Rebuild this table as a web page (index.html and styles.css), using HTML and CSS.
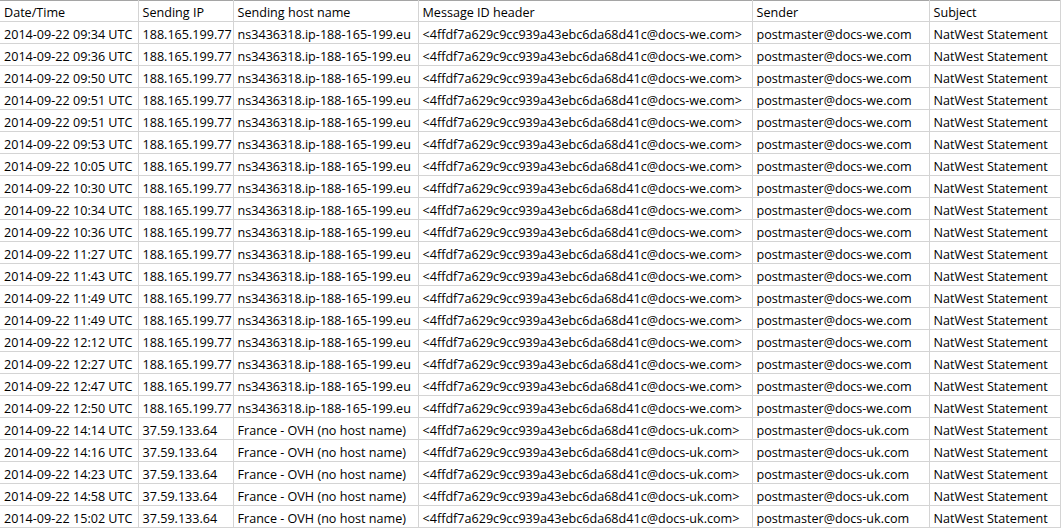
FILE: index.html
```html
<!DOCTYPE html>
<html>
<head>
<meta charset="utf-8">
<link rel="stylesheet" href="styles.css">
</head>
<body>
<table class="sheet">
<colgroup>
<col class="c1"><col class="c2"><col class="c3"><col class="c4"><col class="c5"><col class="c6">
</colgroup>
<thead>
<tr><th>Date/Time</th><th>Sending IP</th><th>Sending host name</th><th>Message ID header</th><th>Sender</th><th>Subject</th></tr>
</thead>
<tbody>
<tr><td>2014-09-22 09:34 UTC</td><td>188.165.199.77</td><td>ns3436318.ip-188-165-199.eu</td><td>&lt;4ffdf7a629c9cc939a43ebc6da68d41c@docs-we.com&gt;</td><td>postmaster@docs-we.com</td><td>NatWest Statement</td></tr>
<tr><td>2014-09-22 09:36 UTC</td><td>188.165.199.77</td><td>ns3436318.ip-188-165-199.eu</td><td>&lt;4ffdf7a629c9cc939a43ebc6da68d41c@docs-we.com&gt;</td><td>postmaster@docs-we.com</td><td>NatWest Statement</td></tr>
<tr><td>2014-09-22 09:50 UTC</td><td>188.165.199.77</td><td>ns3436318.ip-188-165-199.eu</td><td>&lt;4ffdf7a629c9cc939a43ebc6da68d41c@docs-we.com&gt;</td><td>postmaster@docs-we.com</td><td>NatWest Statement</td></tr>
<tr><td>2014-09-22 09:51 UTC</td><td>188.165.199.77</td><td>ns3436318.ip-188-165-199.eu</td><td>&lt;4ffdf7a629c9cc939a43ebc6da68d41c@docs-we.com&gt;</td><td>postmaster@docs-we.com</td><td>NatWest Statement</td></tr>
<tr><td>2014-09-22 09:51 UTC</td><td>188.165.199.77</td><td>ns3436318.ip-188-165-199.eu</td><td>&lt;4ffdf7a629c9cc939a43ebc6da68d41c@docs-we.com&gt;</td><td>postmaster@docs-we.com</td><td>NatWest Statement</td></tr>
<tr><td>2014-09-22 09:53 UTC</td><td>188.165.199.77</td><td>ns3436318.ip-188-165-199.eu</td><td>&lt;4ffdf7a629c9cc939a43ebc6da68d41c@docs-we.com&gt;</td><td>postmaster@docs-we.com</td><td>NatWest Statement</td></tr>
<tr><td>2014-09-22 10:05 UTC</td><td>188.165.199.77</td><td>ns3436318.ip-188-165-199.eu</td><td>&lt;4ffdf7a629c9cc939a43ebc6da68d41c@docs-we.com&gt;</td><td>postmaster@docs-we.com</td><td>NatWest Statement</td></tr>
<tr><td>2014-09-22 10:30 UTC</td><td>188.165.199.77</td><td>ns3436318.ip-188-165-199.eu</td><td>&lt;4ffdf7a629c9cc939a43ebc6da68d41c@docs-we.com&gt;</td><td>postmaster@docs-we.com</td><td>NatWest Statement</td></tr>
<tr><td>2014-09-22 10:34 UTC</td><td>188.165.199.77</td><td>ns3436318.ip-188-165-199.eu</td><td>&lt;4ffdf7a629c9cc939a43ebc6da68d41c@docs-we.com&gt;</td><td>postmaster@docs-we.com</td><td>NatWest Statement</td></tr>
<tr><td>2014-09-22 10:36 UTC</td><td>188.165.199.77</td><td>ns3436318.ip-188-165-199.eu</td><td>&lt;4ffdf7a629c9cc939a43ebc6da68d41c@docs-we.com&gt;</td><td>postmaster@docs-we.com</td><td>NatWest Statement</td></tr>
<tr><td>2014-09-22 11:27 UTC</td><td>188.165.199.77</td><td>ns3436318.ip-188-165-199.eu</td><td>&lt;4ffdf7a629c9cc939a43ebc6da68d41c@docs-we.com&gt;</td><td>postmaster@docs-we.com</td><td>NatWest Statement</td></tr>
<tr><td>2014-09-22 11:43 UTC</td><td>188.165.199.77</td><td>ns3436318.ip-188-165-199.eu</td><td>&lt;4ffdf7a629c9cc939a43ebc6da68d41c@docs-we.com&gt;</td><td>postmaster@docs-we.com</td><td>NatWest Statement</td></tr>
<tr><td>2014-09-22 11:49 UTC</td><td>188.165.199.77</td><td>ns3436318.ip-188-165-199.eu</td><td>&lt;4ffdf7a629c9cc939a43ebc6da68d41c@docs-we.com&gt;</td><td>postmaster@docs-we.com</td><td>NatWest Statement</td></tr>
<tr><td>2014-09-22 11:49 UTC</td><td>188.165.199.77</td><td>ns3436318.ip-188-165-199.eu</td><td>&lt;4ffdf7a629c9cc939a43ebc6da68d41c@docs-we.com&gt;</td><td>postmaster@docs-we.com</td><td>NatWest Statement</td></tr>
<tr><td>2014-09-22 12:12 UTC</td><td>188.165.199.77</td><td>ns3436318.ip-188-165-199.eu</td><td>&lt;4ffdf7a629c9cc939a43ebc6da68d41c@docs-we.com&gt;</td><td>postmaster@docs-we.com</td><td>NatWest Statement</td></tr>
<tr><td>2014-09-22 12:27 UTC</td><td>188.165.199.77</td><td>ns3436318.ip-188-165-199.eu</td><td>&lt;4ffdf7a629c9cc939a43ebc6da68d41c@docs-we.com&gt;</td><td>postmaster@docs-we.com</td><td>NatWest Statement</td></tr>
<tr><td>2014-09-22 12:47 UTC</td><td>188.165.199.77</td><td>ns3436318.ip-188-165-199.eu</td><td>&lt;4ffdf7a629c9cc939a43ebc6da68d41c@docs-we.com&gt;</td><td>postmaster@docs-we.com</td><td>NatWest Statement</td></tr>
<tr><td>2014-09-22 12:50 UTC</td><td>188.165.199.77</td><td>ns3436318.ip-188-165-199.eu</td><td>&lt;4ffdf7a629c9cc939a43ebc6da68d41c@docs-we.com&gt;</td><td>postmaster@docs-we.com</td><td>NatWest Statement</td></tr>
<tr><td>2014-09-22 14:14 UTC</td><td>37.59.133.64</td><td>France - OVH (no host name)</td><td>&lt;4ffdf7a629c9cc939a43ebc6da68d41c@docs-uk.com&gt;</td><td>postmaster@docs-uk.com</td><td>NatWest Statement</td></tr>
<tr><td>2014-09-22 14:16 UTC</td><td>37.59.133.64</td><td>France - OVH (no host name)</td><td>&lt;4ffdf7a629c9cc939a43ebc6da68d41c@docs-uk.com&gt;</td><td>postmaster@docs-uk.com</td><td>NatWest Statement</td></tr>
<tr><td>2014-09-22 14:23 UTC</td><td>37.59.133.64</td><td>France - OVH (no host name)</td><td>&lt;4ffdf7a629c9cc939a43ebc6da68d41c@docs-uk.com&gt;</td><td>postmaster@docs-uk.com</td><td>NatWest Statement</td></tr>
<tr><td>2014-09-22 14:58 UTC</td><td>37.59.133.64</td><td>France - OVH (no host name)</td><td>&lt;4ffdf7a629c9cc939a43ebc6da68d41c@docs-uk.com&gt;</td><td>postmaster@docs-uk.com</td><td>NatWest Statement</td></tr>
<tr><td>2014-09-22 15:02 UTC</td><td>37.59.133.64</td><td>France - OVH (no host name)</td><td>&lt;4ffdf7a629c9cc939a43ebc6da68d41c@docs-uk.com&gt;</td><td>postmaster@docs-uk.com</td><td>NatWest Statement</td></tr>
</tbody>
</table>
</body>
</html>
```

FILE: styles.css
```css
html, body {
  margin: 0;
  padding: 0;
  background: #ffffff;
}
body {
  font-family: "Open Sans", "Liberation Sans", sans-serif;
  font-size: 12.6px;
  color: #000000;
  overflow: hidden;
}
.sheet {
  border-collapse: collapse;
  table-layout: fixed;
  width: 1060px;
  border-top: 1px solid #a5a5a5;
}
.c1 { width: 138px; }
.c2 { width: 95px; }
.c3 { width: 185px; }
.c4 { width: 334px; }
.c5 { width: 177px; }
.c6 { width: 131px; }
.sheet th,
.sheet td {
  height: 16px;
  padding: 5px 0 0 4px;
  border-right: 1px solid #d4d4d4;
  border-bottom: 1px solid #d4d4d4;
  text-align: left;
  font-weight: normal;
  white-space: nowrap;
  overflow: hidden;
  line-height: 16px;
  vertical-align: top;
}
.sheet th {
  height: 16px;
  padding-top: 4px;
}
```
